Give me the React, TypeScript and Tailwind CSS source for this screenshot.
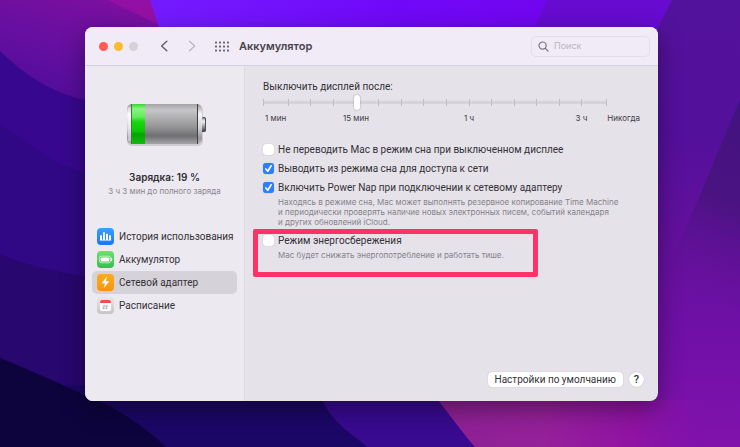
import { useState } from "react";
import type { ReactNode } from "react";

const TICKS = [0, 7.3, 13.7, 20.4, 27, 33.5, 40, 46.6, 53.2, 59.8, 66.3, 72.9, 79.5, 86.1, 92.5, 99.8];

/** Abstract wavy wallpaper behind the window. */
const Wallpaper = () => (
  <svg
    className="absolute inset-0 h-full w-full"
    viewBox="0 0 740 447"
    preserveAspectRatio="none"
    aria-hidden="true"
  >
    <defs>
      <linearGradient id="wpCorner" x1="0.2" y1="1" x2="0.7" y2="0">
        <stop offset="0" stopColor="#4c0c98" />
        <stop offset="0.5" stopColor="#650fa0" />
        <stop offset="1" stopColor="#7c0fa0" />
      </linearGradient>
      <linearGradient id="wpTop" x1="0" y1="0" x2="1" y2="0">
        <stop offset="0" stopColor="#741bff" />
        <stop offset="0.6" stopColor="#7008f8" />
        <stop offset="1" stopColor="#7205ee" />
      </linearGradient>
      <linearGradient id="wpRight" x1="0" y1="0" x2="0" y2="1">
        <stop offset="0" stopColor="#53129c" />
        <stop offset="0.3" stopColor="#53109b" />
        <stop offset="0.55" stopColor="#65109d" />
        <stop offset="0.75" stopColor="#7010a6" />
        <stop offset="1" stopColor="#8012ab" />
      </linearGradient>
      <linearGradient id="wpWedge" x1="0.5" y1="0" x2="0.3" y2="1">
        <stop offset="0" stopColor="#43137f" />
        <stop offset="0.4" stopColor="#49137f" stopOpacity="0.9" />
        <stop offset="1" stopColor="#6d10a6" stopOpacity="0" />
      </linearGradient>
      <linearGradient id="wpFloor" x1="0" y1="0" x2="1" y2="0">
        <stop offset="0" stopColor="#8d2192" />
        <stop offset="0.35" stopColor="#95209a" />
        <stop offset="0.65" stopColor="#9013a3" />
        <stop offset="0.9" stopColor="#8012ab" stopOpacity="0" />
      </linearGradient>
    </defs>
    <rect width="740" height="447" fill="#28076f" />
    <path d="M0 0H200V290H160C90 276 40 272 0 254Z" fill="#300885" />
    <path d="M0 0H200V180H120C50 172 40 145 0 126Z" fill="#38078f" />
    <path d="M0 0H150L163 27V105H110C60 98 30 80 0 51Z" fill="url(#wpCorner)" />
    <path d="M108 0H150L163 27Z" fill="#9410a4" />
    <path d="M150 0H560L520 60H170Z" fill="url(#wpTop)" />
    <path d="M547 0H740V447H440V60H520Z" fill="#670bd0" />
    <path d="M672 0H740V447H480L600 140Z" fill="url(#wpRight)" />
    <path d="M740 100C730 122 715 160 700 195L650 310H740Z" fill="url(#wpWedge)" />
    <path d="M60 385H330L368 447H166Z" fill="#1b0766" />
    <path d="M0 358C35 372 62 385 85 395C118 408 145 427 166 447H0Z" fill="#0d043e" />
    <path d="M322 400H440L475 447H368C345 430 332 420 322 400Z" fill="#380a90" />
    <path d="M438 400H740V447H475C460 430 450 415 438 400Z" fill="url(#wpFloor)" />
  </svg>
);

const BatteryPicture = () => (
  <svg className="h-12 w-[84px]" viewBox="0 0 84 48" aria-hidden="true">
    <defs>
      <linearGradient id="metal" x1="0" y1="0" x2="0" y2="1">
        <stop offset="0" stopColor="#a4a4a6" />
        <stop offset="0.15" stopColor="#c6c6c8" />
        <stop offset="0.55" stopColor="#98989a" />
        <stop offset="0.8" stopColor="#707072" />
        <stop offset="1" stopColor="#a4a4a6" />
      </linearGradient>
      <linearGradient id="cap" x1="0" y1="0" x2="0" y2="1">
        <stop offset="0" stopColor="#98989b" />
        <stop offset="0.25" stopColor="#f7f7f8" />
        <stop offset="0.6" stopColor="#d2d2d5" />
        <stop offset="0.85" stopColor="#98989c" />
        <stop offset="1" stopColor="#b5b5b8" />
      </linearGradient>
      <linearGradient id="charge" x1="0" y1="0" x2="0" y2="1">
        <stop offset="0" stopColor="#35d72e" />
        <stop offset="0.12" stopColor="#8bf383" />
        <stop offset="0.32" stopColor="#62ed5b" />
        <stop offset="0.45" stopColor="#18d510" />
        <stop offset="0.68" stopColor="#0cc706" />
        <stop offset="0.75" stopColor="#03a501" />
        <stop offset="1" stopColor="#12b90e" />
      </linearGradient>
      <linearGradient id="tip" x1="0" y1="0" x2="0" y2="1">
        <stop offset="0" stopColor="#77777a" />
        <stop offset="0.3" stopColor="#f4f4f5" />
        <stop offset="0.6" stopColor="#a2a2a5" />
        <stop offset="1" stopColor="#38383b" />
      </linearGradient>
    </defs>
    <rect x="4" y="5" width="76" height="41" rx="5" fill="#000" fillOpacity="0.12" />
    <rect x="76" y="17" width="7" height="15" rx="2" fill="url(#tip)" />
    <path d="M80 17.5H81A1.5 1.5 0 0 1 82.5 19V30A1.5 1.5 0 0 1 81 31.5H80" fill="none" stroke="#505053" />
    <rect x="4" y="4" width="75" height="40" rx="5" fill="url(#cap)" />
    <rect x="5" y="7" width="3" height="34" rx="1" fill="#fff" fillOpacity="0.45" />
    <rect x="9" y="4" width="65" height="40" fill="url(#metal)" />
    <rect x="9" y="4" width="13" height="40" fill="url(#charge)" />
    <rect x="8" y="4" width="1" height="40" fill="#3f7a3c" />
    <rect x="74" y="4" width="1" height="40" fill="#404043" />
  </svg>
);

const HistoryIcon = () => (
  <svg className="size-[17px] shrink-0" viewBox="0 0 17 17" aria-hidden="true">
    <defs>
      <linearGradient id="blueTile" x1="0" y1="0" x2="0" y2="1">
        <stop offset="0" stopColor="#3aa0ff" />
        <stop offset="1" stopColor="#1a74fb" />
      </linearGradient>
    </defs>
    <rect width="17" height="17" rx="4" fill="url(#blueTile)" />
    <path d="M4 7.2V12M7 4.2V12M10 5.7V12M13 7.2V12" stroke="#fff" strokeWidth="1.9" />
    <path d="M2.8 12.1H14.2" stroke="#fff" strokeWidth="0.9" />
  </svg>
);

const BatteryIcon = () => (
  <svg className="size-[17px] shrink-0" viewBox="0 0 17 17" aria-hidden="true">
    <defs>
      <linearGradient id="greenTile" x1="0" y1="0" x2="0" y2="1">
        <stop offset="0" stopColor="#6be36d" />
        <stop offset="1" stopColor="#35bf50" />
      </linearGradient>
    </defs>
    <rect width="17" height="17" rx="4" fill="url(#greenTile)" />
    <rect x="2.5" y="5.2" width="11" height="6.6" rx="1.8" fill="none" stroke="#fff" strokeWidth="0.8" strokeOpacity="0.75" />
    <rect x="3.7" y="6.4" width="8.6" height="4.2" rx="0.9" fill="#fff" />
    <path d="M14.6 7.3V9.7" stroke="#fff" strokeWidth="0.9" strokeLinecap="round" />
  </svg>
);

const AdapterIcon = () => (
  <svg className="size-[17px] shrink-0" viewBox="0 0 17 17" aria-hidden="true">
    <defs>
      <linearGradient id="orangeTile" x1="0" y1="0" x2="0" y2="1">
        <stop offset="0" stopColor="#fbab28" />
        <stop offset="1" stopColor="#fb9507" />
      </linearGradient>
    </defs>
    <rect width="17" height="17" rx="4" fill="url(#orangeTile)" />
    <path d="M9.8 2.6L4.6 9.3H7.9L6.8 14.2L12.2 7.3H8.9Z" fill="#fff" />
  </svg>
);

const ScheduleIcon = () => (
  <svg className="size-[17px] shrink-0" viewBox="0 0 17 17" aria-hidden="true">
    <defs>
      <linearGradient id="greyTile" x1="0" y1="0" x2="0" y2="1">
        <stop offset="0" stopColor="#e9e7ea" />
        <stop offset="1" stopColor="#c6c4c8" />
      </linearGradient>
    </defs>
    <rect width="17" height="17" rx="4" fill="url(#greyTile)" />
    <rect x="3" y="3" width="11" height="11" rx="2" fill="#fff" />
    <path d="M3 6V5A2 2 0 0 1 5 3H12A2 2 0 0 1 14 5V6Z" fill="#f4504b" />
    <path d="M5.5 9.2H11.5M5.2 11.2H10.4M7.2 7.8L6.4 12.4M10 7.8L9.2 12.4" stroke="#a9a7ab" strokeWidth="0.7" />
  </svg>
);

const SECTIONS = [
  { id: "history", label: "История использования", icon: <HistoryIcon /> },
  { id: "battery", label: "Аккумулятор", icon: <BatteryIcon /> },
  { id: "adapter", label: "Сетевой адаптер", icon: <AdapterIcon /> },
  { id: "schedule", label: "Расписание", icon: <ScheduleIcon /> },
];

const Toolbar = () => (
  <header className="flex h-[39px] shrink-0 items-center border-b border-[#d6d2dc] bg-[#f0ebf7] pr-2 pl-3.5">
    <div className="flex gap-[6px]">
      <button aria-label="Закрыть" className="size-[9px] rounded-full bg-[#fe5b52]" />
      <button aria-label="Свернуть" className="size-[9px] rounded-full bg-[#fdba2f]" />
      <button aria-label="Развернуть" className="size-[9px] rounded-full bg-[#d5d1d9]" />
    </div>
    <button aria-label="Назад" className="ml-[22px] text-[#5f5c64]">
      <svg className="h-3 w-2" viewBox="0 0 8 12" fill="none" stroke="currentColor" strokeWidth="1.4" strokeLinecap="round" strokeLinejoin="round">
        <path d="M6.8 1.2L1.6 6L6.8 10.8" />
      </svg>
    </button>
    <button aria-label="Вперед" className="ml-5 text-[#bcb8c2]">
      <svg className="h-3 w-2" viewBox="0 0 8 12" fill="none" stroke="currentColor" strokeWidth="1.4" strokeLinecap="round" strokeLinejoin="round">
        <path d="M1.5 1.2L6.7 6L1.5 10.8" />
      </svg>
    </button>
    <button aria-label="Показать все" className="ml-[18px] text-[#6a676f]">
      <svg className="h-[11px] w-[15px]" viewBox="0 0 15 11" fill="currentColor">
        {[1, 5, 9, 13].map((x) =>
          [0.5, 4.5, 8.5].map((y) => (
            <rect key={`${x}-${y}`} x={x} y={y} width="2" height="2" rx="0.6" />
          )),
        )}
      </svg>
    </button>
    <h1 className="ml-2.5 font-['Inter',sans-serif] text-[11px] font-semibold text-[#47444b]">
      Аккумулятор
    </h1>
    <label className="ml-auto flex h-[21px] w-[119px] items-center gap-[5px] rounded-[5px] border border-[#e3dee8] px-[6px]">
      <svg className="size-[11px] shrink-0 text-[#77737b]" viewBox="0 0 11 11" fill="none" stroke="currentColor" strokeWidth="1.2" strokeLinecap="round" aria-hidden="true">
        <circle cx="4.6" cy="4.6" r="3.6" />
        <path d="M7.4 7.4L10 10" />
      </svg>
      <input
        type="search"
        aria-label="Поиск"
        placeholder="Поиск"
        className="w-full min-w-0 bg-transparent font-['Inter',sans-serif] text-[9px] outline-none placeholder:text-[#b9b5be]"
      />
    </label>
  </header>
);

const Sidebar = () => {
  const [active, setActive] = useState("adapter");

  return (
    <aside className="flex w-[159px] shrink-0 flex-col bg-[#ede9f0] px-[7px] pt-[34px]">
      <div className="flex flex-col items-center font-['Inter',sans-serif]">
        <BatteryPicture />
        <p className="mt-[21px] text-[10px] leading-4 font-semibold text-[#2f2d32]">
          Зарядка: 19 %
        </p>
        <p className="text-[8px] leading-3 text-[#88858c]">3 ч 3 мин до полного заряда</p>
      </div>
      <nav className="mt-7 flex flex-col">
        {SECTIONS.map(({ id, label, icon }) => (
          <button
            key={id}
            onClick={() => setActive(id)}
            className={`flex h-[23px] items-center gap-[5px] rounded-[5px] px-[5px] text-left text-[10px] whitespace-nowrap text-[#343137] ${
              active === id ? "bg-[#d6d2d9]" : ""
            }`}
          >
            {icon}
            {label}
          </button>
        ))}
      </nav>
    </aside>
  );
};

const DisplaySlider = () => {
  const [value, setValue] = useState(27);

  return (
    <div className="pr-1">
      <label htmlFor="display-off" className="block text-[10px] leading-3">
        Выключить дисплей после:
      </label>
      <div className="relative mt-px mr-[33px] h-[17px]">
        <div className="absolute inset-x-0 top-[7px] h-[3px] rounded-full bg-[#d5d2d8]" />
        {TICKS.map((tick) => (
          <span
            key={tick}
            className="absolute top-[5px] h-[7px] w-px bg-[#c0bdc4]"
            style={{ left: `${tick}%` }}
          />
        ))}
        <input
          id="display-off"
          type="range"
          min={0}
          max={100}
          value={value}
          onChange={(e) => setValue(Number(e.target.value))}
          className="absolute inset-0 h-full w-full appearance-none bg-transparent [&::-webkit-slider-thumb]:h-[15px] [&::-webkit-slider-thumb]:w-[6px] [&::-webkit-slider-thumb]:appearance-none [&::-webkit-slider-thumb]:rounded-full [&::-webkit-slider-thumb]:bg-white [&::-webkit-slider-thumb]:shadow-[0_0_2px_rgba(0,0,0,0.35)]"
        />
      </div>
      <div className="mt-px grid grid-cols-[80px_121px_1fr] font-['Inter',sans-serif] text-[8px] leading-3 text-[#3f3c43]">
        <span className="pl-0.5">1 мин</span>
        <span>15 мин</span>
        <span className="flex whitespace-nowrap">
          <span>1 ч</span>
          <span className="mr-5 ml-auto">3 ч</span>
          <span>Никогда</span>
        </span>
      </div>
    </div>
  );
};

interface OptionProps {
  id: string;
  label: string;
  checked?: boolean;
  children?: ReactNode;
}

const Option = ({ id, label, checked = false, children }: OptionProps) => (
  <div>
    <div className="flex h-[13px] items-center gap-[4px]">
      <span className="relative size-[11px] shrink-0">
        <input
          id={id}
          type="checkbox"
          defaultChecked={checked}
          className="peer absolute inset-0 size-[11px] appearance-none rounded-[3px] bg-white shadow-[0_0_1px_rgba(0,0,0,0.3)] checked:bg-[#2a80fb]"
        />
        <svg
          className="pointer-events-none absolute inset-0 hidden size-[11px] peer-checked:block"
          viewBox="0 0 10 10"
          fill="none"
          stroke="#fff"
          strokeWidth="1.5"
          strokeLinecap="round"
          strokeLinejoin="round"
          aria-hidden="true"
        >
          <path d="M2.6 5.4L4.3 7.5L7.4 2.5" />
        </svg>
      </span>
      <label htmlFor={id} className="text-[10px] leading-[13px] whitespace-nowrap">
        {label}
      </label>
    </div>
    {children && (
      <p className="mt-[3px] pl-[15px] font-['Inter',sans-serif] text-[8px] leading-[10px] text-[#85828a]">
        {children}
      </p>
    )}
  </div>
);

export default function App() {
  return (
    <div className="relative flex min-h-screen overflow-hidden bg-[#2b0777] pt-[27px] pr-[82px] pb-[46px] pl-[85px] font-['Roboto','Liberation_Sans',sans-serif]">
      <Wallpaper />
      <div className="relative flex flex-1 flex-col overflow-hidden rounded-[8px] bg-[#e5e2e9] text-[#343137] shadow-[0_8px_24px_rgba(0,0,0,0.4)]">
        <Toolbar />
        <div className="flex flex-1">
          <Sidebar />
          <main className="flex min-w-0 flex-1 flex-col border-l border-[#dfdbe3] pt-[15px] pr-[14px] pb-[14px] pl-[18px]">
            <DisplaySlider />
            <div className="mt-[19px] flex flex-col gap-[6px]">
              <Option id="no-sleep" label="Не переводить Mac в режим сна при выключенном дисплее" />
              <Option id="wake" label="Выводить из режима сна для доступа к сети" checked />
              <Option id="power-nap" label="Включить Power Nap при подключении к сетевому адаптеру" checked>
                Находясь в режиме сна, Mac может выполнять резервное копирование Time Machine
                <br />и периодически проверять наличие новых электронных писем, событий календаря
                <br />и других обновлений iCloud.
              </Option>
            </div>
            <div className="-ml-[10px] mt-0.5 w-[285px] rounded-[2px] border-[5px] border-[#fe3168] pb-3 pl-[5px]">
              <Option id="low-power" label="Режим энергосбережения">
                Mac будет снижать энергопотребление и работать тише.
              </Option>
            </div>
            <div className="mt-auto flex items-center justify-end gap-[6px]">
              <button className="h-[15px] rounded-[4px] bg-white px-[7px] text-[10px] leading-[15px] shadow-[0_0_1px_rgba(0,0,0,0.3)]">
                Настройки по умолчанию
              </button>
              <button
                aria-label="Справка"
                className="size-[15px] rounded-full bg-white text-[11px] leading-[15px] font-medium shadow-[0_0_1px_rgba(0,0,0,0.3)]"
              >
                ?
              </button>
            </div>
          </main>
        </div>
      </div>
    </div>
  );
}
